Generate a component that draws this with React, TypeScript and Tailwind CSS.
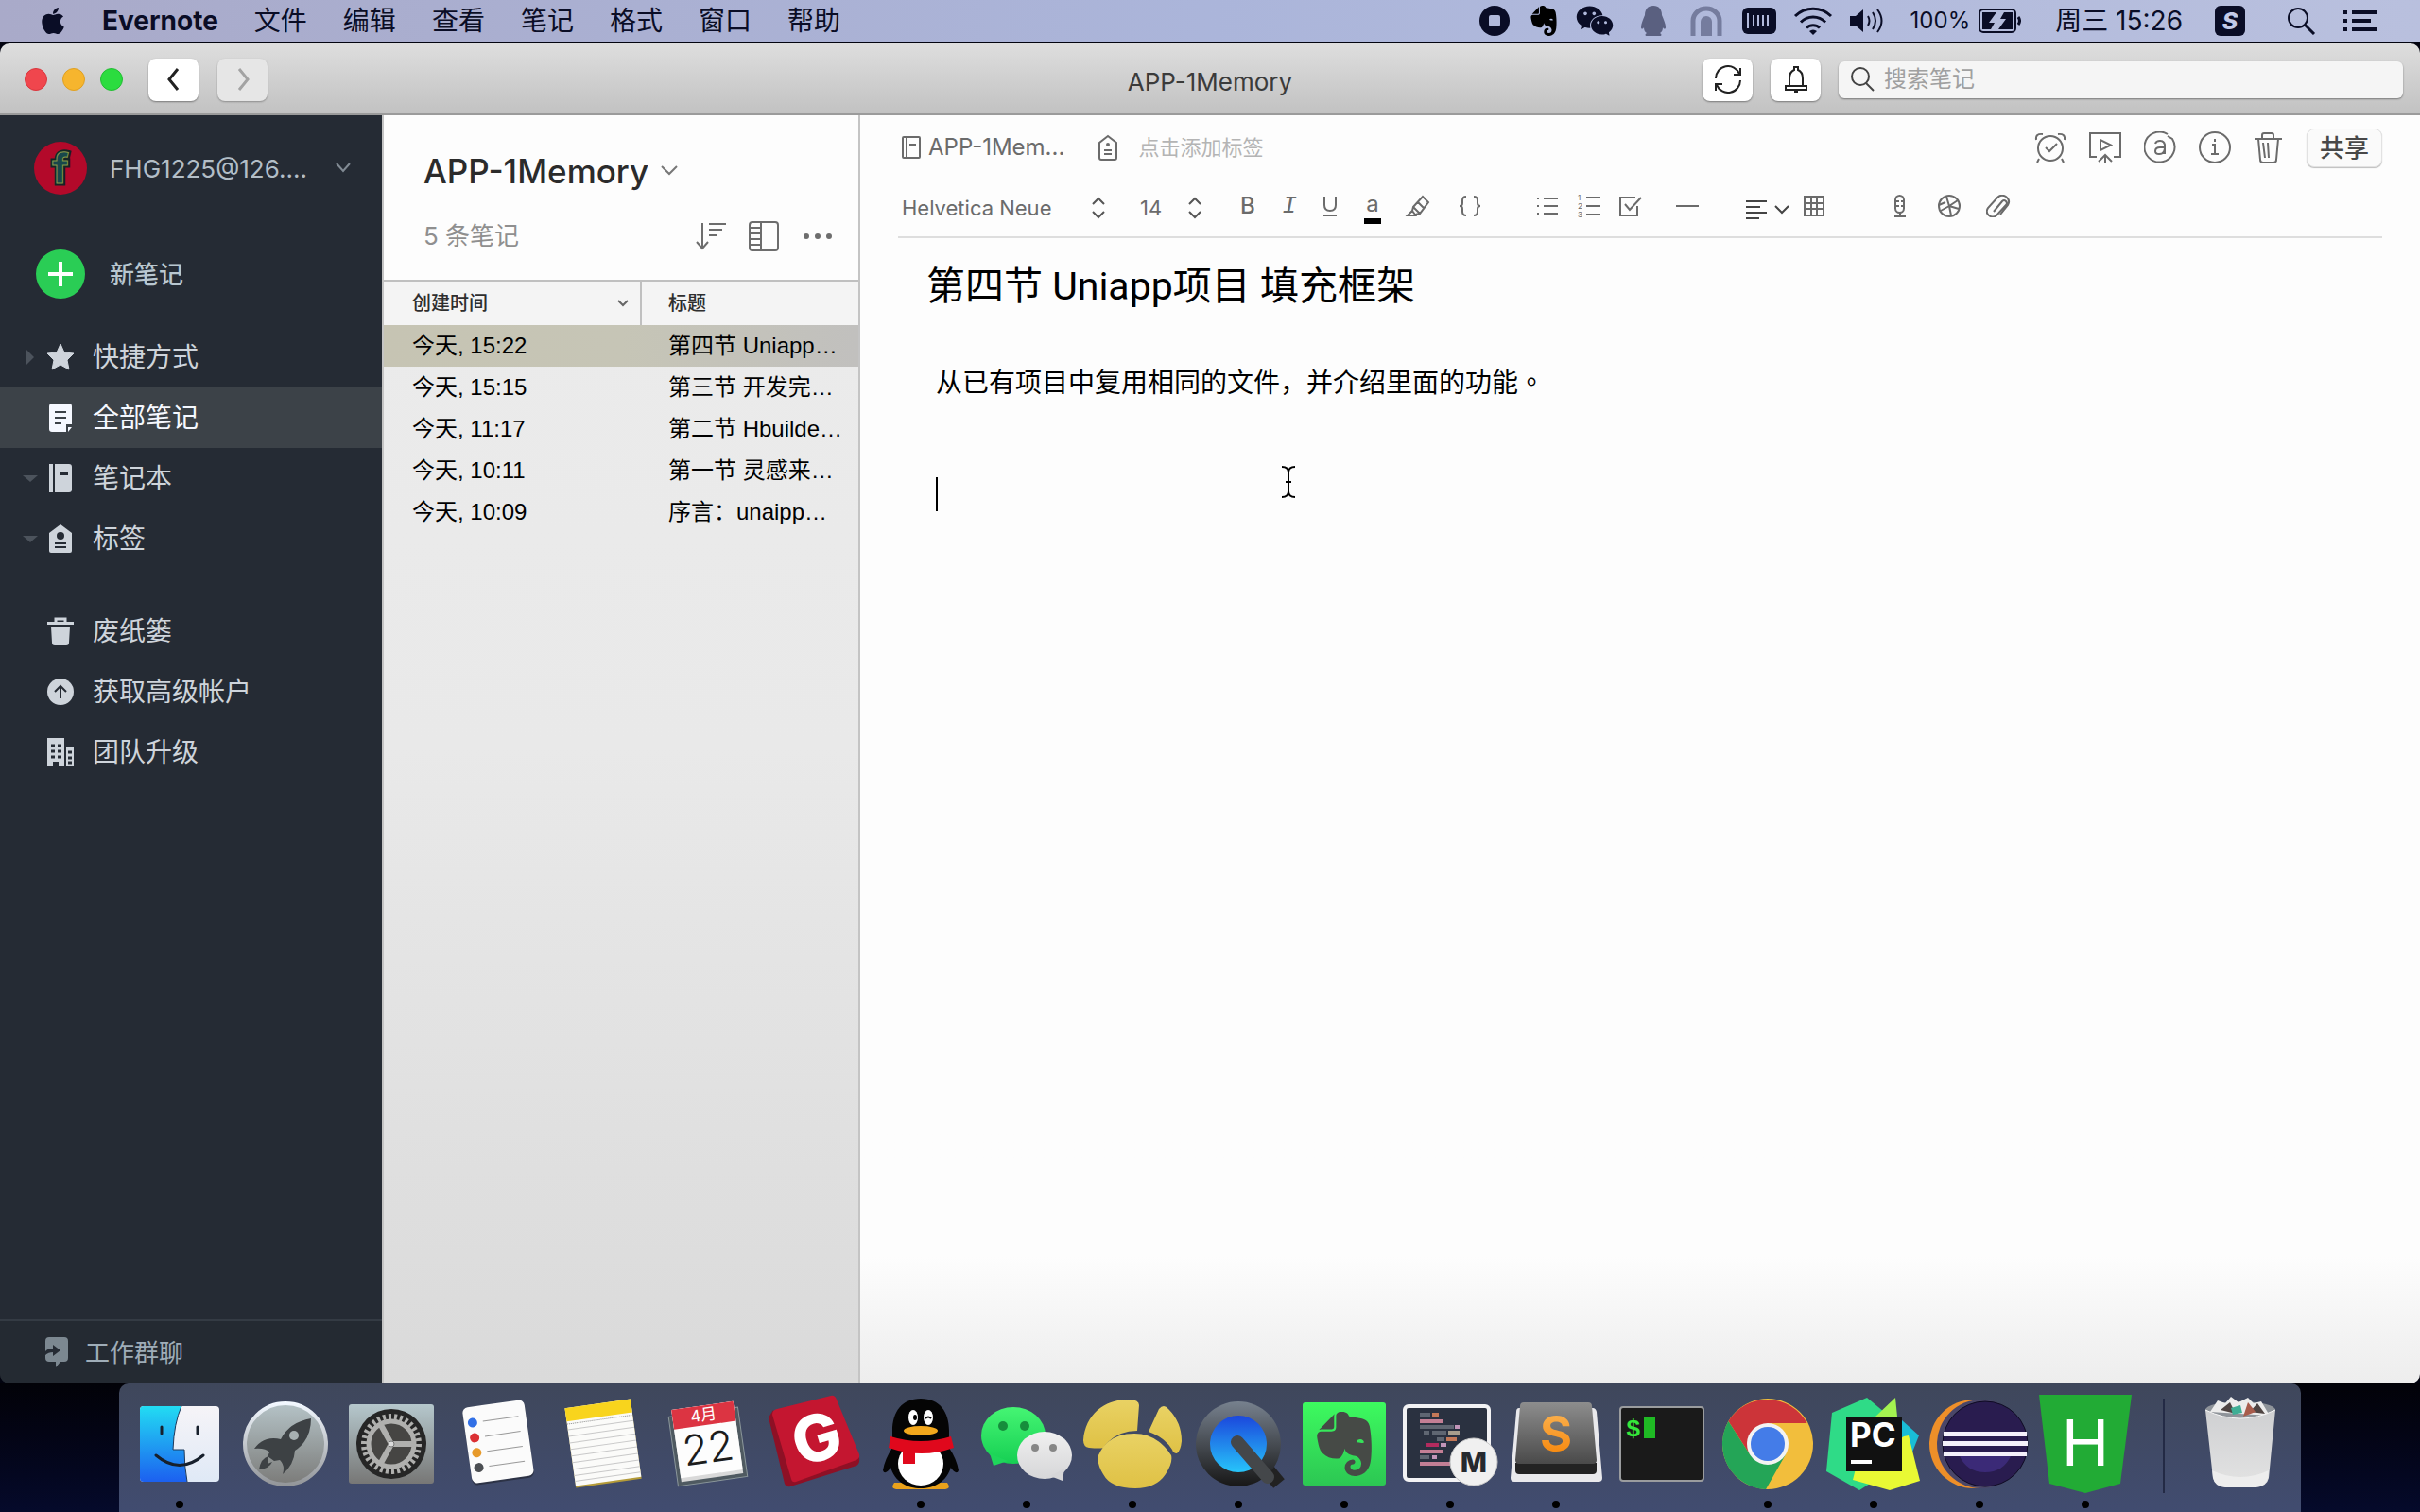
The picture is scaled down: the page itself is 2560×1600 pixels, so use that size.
import type { ReactNode } from 'react'
import { FaApple } from 'react-icons/fa'
import { SiEvernote } from 'react-icons/si'
import { AiFillWechat } from 'react-icons/ai'

const menus = ['文件', '编辑', '查看', '笔记', '格式', '窗口', '帮助']

const notes = [
  { time: '今天, 15:22', title: '第四节 Uniapp…', selected: true },
  { time: '今天, 15:15', title: '第三节 开发完…', selected: false },
  { time: '今天, 11:17', title: '第二节 Hbuilde…', selected: false },
  { time: '今天, 10:11', title: '第一节 灵感来…', selected: false },
  { time: '今天, 10:09', title: '序言：unaipp…', selected: false },
]

interface IconProps {
  w?: number
  h?: number
  sw?: number
  className?: string
  children: ReactNode
}

function Icon({ w = 28, h = 28, sw = 2, className, children }: IconProps) {
  return (
    <svg
      width={w}
      height={h}
      viewBox={`0 0 ${w} ${h}`}
      fill="none"
      stroke="currentColor"
      strokeWidth={sw}
      className={className}
      aria-hidden="true"
    >
      {children}
    </svg>
  )
}

/* ---------- menu bar ---------- */

function MenuBar() {
  return (
    <header className="flex h-11 shrink-0 items-center bg-linear-to-r from-[#a9aac9] via-[#abb5da] to-[#b9c0de] pr-[45px] pl-10 text-[#0a0d26]">
      <FaApple className="size-8" />
      <nav className="ml-9 flex items-center gap-[38px] text-[28px] leading-9">
        <button className="font-bold">Evernote</button>
        {menus.map((m) => (
          <button key={m}>{m}</button>
        ))}
      </nav>
      <div className="ml-auto flex items-center">
        <div className="flex items-center gap-3">
          <Icon w={40} h={32}>
            <circle cx="20" cy="16" r="16" fill="currentColor" stroke="none" />
            <rect x="14" y="10" width="12" height="12" rx="2" fill="#b1b9db" stroke="none" />
          </Icon>
          <SiEvernote className="h-8 w-10 text-black" />
          <AiFillWechat className="size-11" />
        </div>
        <div className="ml-5 flex items-center gap-4">
          <Icon w={40} h={32}>
            <path d="M20 0c-6 0-9 4-9 10-2 5-4 9-4 13 0 2 2 2 3 0 0 3 1 5 3 6-2 1-2 3 0 3h14c2 0 2-2 0-3 2-1 3-3 3-6 1 2 3 2 3 0 0-4-2-8-4-13 0-6-3-10-9-10Z" fill="#5a6080" stroke="none" />
          </Icon>
          <Icon w={40} h={32} sw={5}>
            <path d="M6 32V16a14 13 0 0 1 28 0v16" stroke="#757c9e" />
            <path d="M14 32V17a6 6 0 0 1 12 0v15Z" fill="#757c9e" stroke="none" />
          </Icon>
          <Icon w={40} h={32}>
            <rect x="2" y="2" width="36" height="28" rx="6" fill="currentColor" stroke="none" />
            <path d="M8 8v16M14 10v12M19 10v12M24 10v12M29 10v12" stroke="#b1b9db" strokeWidth="2" />
          </Icon>
          <Icon w={42} h={32} sw={3}>
            <path d="M2 11a27 27 0 0 1 38 0M8 17.500a18 18 0 0 1 26 0M14 23.500a10 10 0 0 1 14 0" />
            <path d="m21 31-4-4a6 6 0 0 1 8 0Z" fill="currentColor" stroke="none" />
          </Icon>
          <Icon w={38} h={32} sw={2}>
            <path d="M2 11h6l8-7v24l-8-7H2Z" fill="currentColor" stroke="none" />
            <path d="M21 11q3 5 0 10M26 7q6 9 0 18M31 4q9 12 0 24" />
          </Icon>
        </div>
        <span className="ml-7 text-2xl">100%</span>
        <Icon w={46} h={28} className="ml-2" sw={2}>
          <rect x="2" y="2" width="38" height="24" rx="4" />
          <path d="M43 10q3 4 0 8" strokeWidth="3" />
          <path d="M5 5h15l-8 11h6l-4 7H5ZM37 5v18H22l8-11h-6l4-7Z" fill="currentColor" stroke="none" />
        </Icon>
        <span className="ml-9 text-[28px]">周三 15:26</span>
        <svg width="32" height="32" viewBox="0 0 32 32" className="ml-[34px]" aria-hidden="true">
          <rect width="32" height="32" rx="6" fill="#0a0d26" />
          <text x="16" y="25" textAnchor="middle" fontSize="25" fontWeight="800" fontStyle="italic" fill="#c3cae8">S</text>
        </svg>
        <Icon w={32} h={30} className="ml-11" sw={2}>
          <circle cx="12" cy="12" r="10" />
          <path d="m19 19 10 10" strokeWidth="3" />
        </Icon>
        <Icon w={36} h={22} className="ml-7" sw={4}>
          <path d="M0 2h4M9 2h27M0 11h4M9 11h20M0 20h4M9 20h27" />
        </Icon>
      </div>
    </header>
  )
}

/* ---------- window title bar ---------- */

function TitleBar() {
  return (
    <div className="grid h-[76px] shrink-0 grid-cols-[1fr_auto_1fr] items-center border-b-2 border-[#9b9b9b] bg-linear-to-b from-[#dedede] to-[#c2c2c2] px-[18px] pt-[2px]">
      <div className="flex items-center pl-2">
        <div className="flex gap-4">
          <button aria-label="Close" className="size-6 rounded-full border border-[#d9363d] bg-[#f0464d]" />
          <button aria-label="Minimize" className="size-6 rounded-full border border-[#dfa023] bg-[#f6b52e]" />
          <button aria-label="Zoom" className="size-6 rounded-full border border-[#22bd33] bg-[#2bdc3f]" />
        </div>
        <button aria-label="Back" className="ml-[27px] flex h-[45px] w-[53px] items-center justify-center rounded-lg bg-white text-[#222] shadow-[0_1px_2px_rgba(0,0,0,0.4)]">
          <Icon w={16} h={26} sw={3}><path d="M12 2 3 13l9 11" /></Icon>
        </button>
        <button aria-label="Forward" className="ml-5 flex h-[45px] w-[53px] items-center justify-center rounded-lg bg-[#e6e6e6] text-[#a3a3a3] shadow-[0_1px_2px_rgba(0,0,0,0.3)]">
          <Icon w={16} h={26} sw={3}><path d="m4 2 9 11-9 11" /></Icon>
        </button>
      </div>
      <h1 className="pt-[6px] text-[26px] leading-8 text-[#3b3b3b]">APP-1Memory</h1>
      <div className="flex items-center justify-end">
        <button aria-label="Sync" className="flex h-[45px] w-[53px] items-center justify-center rounded-lg bg-white text-[#222] shadow-[0_1px_2px_rgba(0,0,0,0.4)]">
          <Icon w={30} h={30}>
            <path d="M2 14A13 13 0 0 1 27 9M28 3v7h-7M28 16A13 13 0 0 1 3 21M2 27v-7h7" />
          </Icon>
        </button>
        <button aria-label="Notifications" className="ml-[19px] flex h-[45px] w-[53px] items-center justify-center rounded-lg bg-white text-[#222] shadow-[0_1px_2px_rgba(0,0,0,0.4)]">
          <Icon w={26} h={30}>
            <path d="M6 21V14q0-7 5-9V2h4v3q5 2 5 9v7M2 22h22v4H2ZM11 28h4" />
          </Icon>
        </button>
        <label className="ml-[19px] flex h-[39px] w-[597px] items-center rounded-md bg-[#f5f5f5] px-3 shadow-[0_1px_2px_rgba(0,0,0,0.4)]">
          <Icon w={26} h={28} className="text-[#444]">
            <circle cx="11" cy="11" r="9" />
            <path d="m17 18 8 8" />
          </Icon>
          <input type="search" aria-label="搜索笔记" placeholder="搜索笔记" className="ml-[10px] min-w-0 flex-1 bg-transparent text-2xl outline-none placeholder:text-[#a0a0a0]" />
        </label>
      </div>
    </div>
  )
}

/* ---------- sidebar ---------- */

interface NavRowProps {
  icon: ReactNode
  label: string
  arrow?: 'right' | 'down'
  active?: boolean
}

function NavRow({ icon, label, arrow, active }: NavRowProps) {
  return (
    <button className={`flex h-16 w-full items-center pl-6 text-[28px] ${active ? 'bg-[#3c4248] text-[#f5f8ff]' : 'text-[#ced4db]'}`}>
      <svg width="16" height="16" viewBox="0 0 16 16" fill="#4c535c" aria-hidden="true">
        {arrow === 'right' && <path d="m4 0 8 8-8 8Z" />}
        {arrow === 'down' && <path d="m0 5 8 7 8-7Z" />}
      </svg>
      <svg width="28" height="30" viewBox="0 0 28 30" fill="currentColor" className="ml-[10px]" aria-hidden="true">
        {icon}
      </svg>
      <span className="ml-5">{label}</span>
    </button>
  )
}

function Sidebar() {
  return (
    <aside className="flex w-[404px] shrink-0 flex-col bg-[#252b34]">
      <div className="mt-7 flex h-14 items-center pl-9">
        <svg width="56" height="56" viewBox="0 0 56 56" aria-hidden="true">
          <circle cx="28" cy="28" r="28" fill="#b3092a" />
          <g fontSize="44" fontWeight="700" textAnchor="middle">
            <text x="28" y="44" fill="#152526" stroke="#152526" strokeWidth="5">f</text>
            <text x="28" y="44" fill="#18474b" stroke="#86994a" strokeWidth="1">f</text>
          </g>
        </svg>
        <button className="ml-6 flex flex-1 items-center text-[26px] text-[#b3bec7]">
          FHG1225@126....
          <Icon w={18} h={12} sw={2} className="mr-8 ml-auto text-[#818a93]"><path d="m2 1 7 8 7-8" /></Icon>
        </button>
      </div>
      <button className="mt-[58px] flex h-[52px] items-center pl-[38px] text-[26px] font-medium text-[#b9c7d0]">
        <svg width="52" height="52" viewBox="0 0 52 52" aria-hidden="true">
          <circle cx="26" cy="26" r="26" fill="#2acd55" />
          <path d="M26 13v26M13 26h26" stroke="#fff" strokeWidth="4" />
        </svg>
        <span className="ml-[26px]">新笔记</span>
      </button>
      <nav className="mt-[30px]">
        <NavRow
          arrow="right"
          label="快捷方式"
          icon={<path d="m14 1 4 9 10 1-7 7 2 10-9-5-9 5 2-10-7-7 10-1Z" stroke="currentColor" strokeLinejoin="round" />}
        />
        <NavRow
          active
          label="全部笔记"
          icon={
            <>
              <path d="M5 0h18q3 0 3 3v19h-6v8H5q-3 0-3-3V3q0-3 3-3ZM22 25h4l-4 5Z" />
              <path d="M8 9h12M8 15h12M8 21h7" stroke="#3c4248" strokeWidth="2" />
            </>
          }
        />
        <NavRow
          arrow="down"
          label="笔记本"
          icon={
            <>
              <path d="M2 0h4v30H2ZM8 0h15q3 0 3 3v24q0 3-3 3H8Z" />
              <path d="M13 10h9" stroke="#252b34" strokeWidth="4" />
            </>
          }
        />
        <NavRow
          arrow="down"
          label="标签"
          icon={
            <>
              <path d="M14 0 26 9v19q0 2-2 2H4q-2 0-2-2V9Z" />
              <circle cx="14" cy="12" r="4" fill="#252b34" />
              <path d="M8 20h12M8 24h12" stroke="#252b34" strokeWidth="2" />
            </>
          }
        />
        <div className="h-[34px]" />
        <NavRow
          label="废纸篓"
          icon={
            <>
              <path d="M4 10h20l-1 17q0 3-3 3H8q-3 0-3-3ZM0 5h28v3H0Z" />
              <path d="M9 6V2h10v4" fill="none" stroke="currentColor" strokeWidth="3" />
            </>
          }
        />
        <NavRow
          label="获取高级帐户"
          icon={
            <>
              <circle cx="14" cy="15" r="14" />
              <path d="M14 22V9m-6 6 6-6 6 6" fill="none" stroke="#252b34" strokeWidth="2" />
            </>
          }
        />
        <NavRow
          label="团队升级"
          icon={
            <>
              <path d="M0 0h18v30h-6v-5H6v5H0ZM20 9h8v21h-8Z" />
              <path d="M4 8h4M11 8h4M4 14h4M11 14h4M4 20h4M11 20h4M22 15h4M22 21h4M22 26h4" stroke="#252b34" strokeWidth="3" />
            </>
          }
        />
      </nav>
      <button className="mt-auto flex h-[68px] items-center border-t-2 border-[#343b44] bg-[#242a32] pl-12 text-[26px] text-[#9fadb8]">
        <svg width="24" height="32" viewBox="0 0 24 32" aria-hidden="true">
          <path d="M4 0h16q4 0 4 4v18q0 4-4 4h-4l-5 6v-6H4q-4 0-4-4V4q0-4 4-4Z" fill="#7c8891" />
          <path d="M0 15q2-3 8-3V8l8 6-8 6v-4q-5 0-8 3Z" fill="#252b34" />
        </svg>
        <span className="ml-[18px]">工作群聊</span>
      </button>
    </aside>
  )
}

/* ---------- note list ---------- */

function NoteList() {
  return (
    <section className="w-[506px] shrink-0 border-x-2 border-[#c4c4c4] bg-linear-to-b from-[#ececec] via-[#e9e9e9] to-[#dadada]">
      <div className="h-[174px] bg-[#fdfdfd] pt-9 pr-7 pl-[42px]">
        <button className="flex items-center text-[35px] leading-[46px] font-medium text-[#2b2b2b]">
          APP-1Memory
          <Icon w={20} h={12} className="ml-3 text-[#777]"><path d="m2 1 8 8 8-8" /></Icon>
        </button>
        <div className="mt-7 flex items-center text-[#6d6d6d]">
          <span className="flex-1 text-[26px] leading-9 text-[#8f8f8f]">5 条笔记</span>
          <button aria-label="Sort">
            <Icon w={32} h={32}><path d="M7 2v27M1 22l6 7 6-7M14 3h18M14 9h14M14 15h9" /></Icon>
          </button>
          <button aria-label="View" className="ml-6">
            <Icon w={32} h={32}><rect x="1" y="1" width="30" height="30" rx="3" /><path d="M13 1v30M1 7h12M1 13h12M1 19h12M1 25h12" /></Icon>
          </button>
          <button aria-label="More" className="ml-[26px]">
            <Icon w={30} h={8}><path d="M3 1a3 3 0 1 1 0 6 3 3 0 0 1 0-6ZM15 1a3 3 0 1 1 0 6 3 3 0 0 1 0-6ZM27 1a3 3 0 1 1 0 6 3 3 0 0 1 0-6Z" fill="currentColor" stroke="none" /></Icon>
          </button>
        </div>
      </div>
      <table className="w-full table-fixed border-collapse text-left text-black">
        <thead>
          <tr className="h-[47px] border-t-2 border-[#c0c0c0] bg-[#f4f4f4] text-xl text-[#2e2e2e]">
            <th className="w-[272px] border-r-2 border-[#c0c0c0] pl-[30px] font-medium">
              <span className="flex items-center justify-between pr-3">
                创建时间
                <Icon w={12} h={10} className="text-[#666]"><path d="m1 2 5 5 5-5" /></Icon>
              </span>
            </th>
            <th className="pl-[28px] font-medium">标题</th>
          </tr>
        </thead>
        <tbody className="font-[Liberation_Sans,Noto_Sans_CJK_SC,sans-serif] text-2xl">
          {notes.map((n) => (
            <tr key={n.time} className={n.selected ? 'h-11 bg-linear-to-r from-[#c6c4b3] via-[#c6c5b6] to-[#c1c0be]' : 'h-11'}>
              <td className="pl-[30px]">{n.time}</td>
              <td className="pl-[29px] whitespace-nowrap">{n.title}</td>
            </tr>
          ))}
        </tbody>
      </table>
    </section>
  )
}

/* ---------- editor ---------- */

function Tool({ label, wide, children }: { label: string; wide?: boolean; children: ReactNode }) {
  return (
    <button aria-label={label} className={`flex h-8 items-center justify-center ${wide ? 'w-[52px]' : 'w-11'}`}>
      {children}
    </button>
  )
}

function UpDown() {
  return (
    <Icon w={16} h={24} className="pointer-events-none text-[#555]">
      <path d="m2 8 6-6 6 6M2 16l6 6 6-6" />
    </Icon>
  )
}

function EditorHead() {
  return (
    <div className="flex h-[68px] items-center pr-10 pl-11 text-[#6b6b6b]">
      <button className="flex items-center text-2xl">
        <Icon w={20} h={24}><rect x="1" y="1" width="18" height="22" rx="1" /><path d="M5 1v22M8 9h7" /></Icon>
        <span className="ml-2">APP-1Mem...</span>
      </button>
      <label className="ml-9 flex items-center">
        <Icon w={20} h={28}>
          <path d="M10 2 19 9v16q0 2-2 2H3q-2 0-2-2V9Z" />
          <circle cx="10" cy="11" r="1" />
          <path d="M6 17h8M6 21h8" />
        </Icon>
        <input aria-label="点击添加标签" placeholder="点击添加标签" className="ml-[22px] w-40 bg-transparent text-[22px] outline-none placeholder:text-[#b4b4b4]" />
      </label>
      <div className="ml-auto flex items-center gap-6">
        <button aria-label="Reminder">
          <Icon w={34} h={34}>
            <circle cx="17" cy="18" r="13" />
            <path d="m12 17 4 4 8-8M2 9Q1 2 9 3M32 9q1-7-7-6M5 29l-2 4M29 29l2 4" />
          </Icon>
        </button>
        <button aria-label="Present">
          <Icon w={34} h={34}>
            <path d="M8 27H1V2h32v25h-7M12 9v11l11-5.500ZM17 34V25M10 32l7-7 7 7" />
          </Icon>
        </button>
        <button aria-label="Annotate">
          <Icon w={34} h={34}>
            <path d="M25 3A16 16 0 1 0 30 8l-5-3" />
            <path d="M12 13q1-3 5-3t5 4v10M22 17h-5q-5 0-5 4 0 3 4 3 6 0 6-7" />
          </Icon>
        </button>
        <button aria-label="Info">
          <Icon w={34} h={34}>
            <circle cx="17" cy="17" r="16" />
            <path d="M14 14h3v10M13 24h8M17 8v3" />
          </Icon>
        </button>
        <button aria-label="Delete">
          <Icon w={32} h={34}>
            <path d="M1 8h29M9 8V4q0-2 2-2h8q2 0 2 2v4M5 8l2 22q0 3 3 3h11q3 0 3-3L26 8M10 12l2 16M15 12l1 16" />
          </Icon>
        </button>
        <button className="flex h-[41px] w-20 items-center justify-center rounded-lg border border-[#e2e2e2] bg-[#fafafa] text-[26px] font-medium text-[#484848] shadow-[0_1px_1px_rgba(0,0,0,0.25)]">
          共享
        </button>
      </div>
    </div>
  )
}

function Toolbar() {
  return (
    <div className="mr-10 ml-10 flex h-[62px] items-start border-b-2 border-[#dedede] pt-3 pl-1 text-[#6b6b6b]">
      <div className="flex h-9 items-center text-[22px]">
        <select aria-label="Font" className="w-[200px] appearance-none bg-transparent outline-none">
          <option>Helvetica Neue</option>
        </select>
        <UpDown />
        <select aria-label="Size" className="ml-9 w-[50px] appearance-none bg-transparent outline-none">
          <option>14</option>
        </select>
        <UpDown />
      </div>
      <div className="ml-[26px] flex">
        <Tool label="Bold"><span className="text-2xl font-medium">B</span></Tool>
        <Tool label="Italic"><span className="font-[Liberation_Mono,monospace] text-[26px] italic">I</span></Tool>
        <Tool label="Underline">
          <Icon w={26} h={24}><path d="M6 2v9q0 6 6 6t6-6V2M5 22h14" /></Icon>
        </Tool>
        <Tool label="Text color">
          <span className="mt-1 flex flex-col items-center text-2xl leading-6">
            a
            <span className="mt-[3px] h-[6px] w-[18px] bg-black" />
          </span>
        </Tool>
        <Tool label="Highlight" wide>
          <Icon h={24}><path d="m9 13 10-11 6 6-9 12-5 1-3-4ZM9 13l7 7M14 8l6 6M8 17l-5 5h9l1-2" /></Icon>
        </Tool>
        <Tool label="Code" wide>
          <Icon h={24}><path d="M13 2Q9 2 9 6v3q0 3-3 3 3 0 3 3v3q0 4 4 4M21 2q4 0 4 4v3q0 3 3 3-3 0-3 3v3q0 4-4 4" /></Icon>
        </Tool>
      </div>
      <div className="ml-[37px] flex">
        <Tool label="Bulleted list">
          <Icon w={24} h={24}><path d="M1 4h2M8 4h15M1 12h2M8 12h15M1 20h2M8 20h15" /></Icon>
        </Tool>
        <Tool label="Numbered list">
          <svg width="26" height="28" viewBox="0 0 26 28" aria-hidden="true">
            <path d="M10 5h15M10 14h15M10 23h15" stroke="currentColor" strokeWidth="2" />
            <g fontSize="8" fill="currentColor">
              <text x="1" y="8">1</text>
              <text x="1" y="17">2</text>
              <text x="1" y="26">3</text>
            </g>
          </svg>
        </Tool>
        <Tool label="Checklist">
          <Icon w={26} h={24}><path d="M18 3H2v19h18V12M7 10l5 6L24 3" /></Icon>
        </Tool>
      </div>
      <div className="ml-4 flex">
        <Tool label="Divider"><Icon w={24} h={24}><path d="M0 12h24" /></Icon></Tool>
      </div>
      <button aria-label="Align" className="mt-1 ml-10 flex h-8 items-center text-[#444]">
        <Icon w={24} h={22}><path d="M0 2h22M0 8h15M0 14h22M0 20h14" strokeWidth="2" /></Icon>
        <Icon w={16} h={12} className="ml-[6px]"><path d="m1 2 7 7 7-7" /></Icon>
      </button>
      <div className="ml-1 flex">
        <Tool label="Table">
          <Icon w={22} h={22}><path d="M1 1h20v20H1ZM1 8h20M1 14h20M8 1v20M14 1v20" /></Icon>
        </Tool>
      </div>
      <div className="ml-[43px] flex">
        <Tool label="Record" wide>
          <Icon w={16} h={24}><rect x="3" y="1" width="9" height="18" rx="4.500" /><path d="M4 7h3M9 7h3M4 12h3M9 12h3M8 19v3M2 23h12" /></Icon>
        </Tool>
        <Tool label="Camera" wide>
          <Icon w={24} h={24}><circle cx="12" cy="12" r="11" /><path d="m9 2 3 10M21 6l-9 6M22 15l-10-3M14 22l-2-10M3 17l9-5M1 11l7-3" /></Icon>
        </Tool>
        <Tool label="Attach" wide>
          <Icon w={26} h={24}><path d="m8 18 9-11q2-2 4 0t0 4L11 22q-4 3-8 0t-1-8L12 3q4-4 9-1 5 4 2 9l-8 10" /></Icon>
        </Tool>
      </div>
    </div>
  )
}

function Editor() {
  return (
    <main className="relative flex min-w-0 flex-1 flex-col bg-linear-to-b from-[#fdfdfd] from-90% to-[#ededed]">
      <EditorHead />
      <Toolbar />
      <input
        aria-label="Title"
        defaultValue="第四节 Uniapp项目 填充框架"
        className="mt-4 mr-10 ml-[70px] h-[62px] bg-transparent font-[Roboto,Noto_Sans_CJK_SC,sans-serif] text-[41px] text-black outline-none"
      />
      <div role="textbox" aria-label="Note" className="mt-[51px] mr-10 ml-20 text-[28px] leading-[44px] text-black">
        <p>从已有项目中复用相同的文件，并介绍里面的功能<span lang="zh-TW" className="font-[Noto_Sans_CJK_TC,sans-serif]">。</span></p>
        <p className="mt-[78px] h-9 w-[2px] bg-black" />
      </div>
      {/* pointer */}
      <Icon w={18} h={34} className="absolute top-[371px] left-[444px] text-black">
        <path d="M2 1q7 0 7 6v20q0 6-7 6M16 1q-7 0-7 6v20q0 6 7 6M6 17h6" />
      </Icon>
    </main>
  )
}

/* ---------- dock ---------- */

function DockItem({ name, running, children }: { name: string; running?: boolean; children: ReactNode }) {
  return (
    <button aria-label={name} className="flex w-28 flex-col items-center">
      <svg width="112" height="112" viewBox="0 0 112 112" aria-hidden="true">{children}</svg>
      {running && <span className="mt-1 size-2 rounded-full bg-black" />}
    </button>
  )
}

function Grad({ id, from, to }: { id: string; from: string; to: string }) {
  return (
    <linearGradient id={id} x1="0" y1="0" x2="0" y2="1">
      <stop offset="0" stopColor={from} />
      <stop offset="1" stopColor={to} />
    </linearGradient>
  )
}

function Dock() {
  return (
    <footer className="flex h-[136px] shrink-0 justify-center bg-linear-to-b from-[#020208] to-[#050a2b]">
      <div className="flex rounded-t-[10px] bg-linear-to-b from-[#3f475b] to-[#414c70] px-2 pt-2">
        <DockItem name="Finder" running>
          <defs>
            <Grad id="fi" from="#22dcf3" to="#1c60f0" />
            <Grad id="fw" from="#f6f4f8" to="#dfe9f6" />
          </defs>
          <rect x="14" y="16" width="84" height="80" rx="4" fill="url(#fw)" />
          <path d="M18 16h40q-8 18-9 46h12q0 18 3 34H18q-4 0-4-4V20q0-4 4-4Z" fill="url(#fi)" />
          <path d="M58 16q-8 18-9 46h12q0 18 3 34" fill="none" stroke="#1d3a5c" strokeWidth="1" />
          <path d="M37 38v7M75 38v7M31 68q25 21 50 0" fill="none" stroke="#17202c" strokeWidth="3" strokeLinecap="round" />
        </DockItem>
        <DockItem name="Launchpad">
          <defs><Grad id="lp" from="#b5c3c7" to="#7b7b79" /><Grad id="lr" from="#f2f8ff" to="#93969a" /></defs>
          <circle cx="56" cy="56" r="43" fill="url(#lp)" stroke="url(#lr)" strokeWidth="4" />
          <path d="M83 29Q60 33 51 51q-18-4-28 10 12-1 16 4l-2 4 7 5 6-1q6 6 3 15 12-10 13-25Q83 52 83 29Z" fill="#3d4144" />
          <path d="M38 69q-8 2-10 14 11-1 14-8l-5 2Z" fill="#3d4144" />
          <circle cx="65" cy="47" r="5" fill="#a7b0b2" />
        </DockItem>
        <DockItem name="System Preferences">
          <defs><Grad id="sp" from="#b5c7cc" to="#777776" /></defs>
          <rect x="11" y="14" width="90" height="84" rx="3" fill="url(#sp)" />
          <circle cx="56" cy="56" r="37" fill="#262626" />
          <circle cx="56" cy="56" r="29" fill="none" stroke="#b0b0ae" strokeWidth="6" pathLength="60" strokeDasharray="1 1" />
          <circle cx="56" cy="56" r="24" fill="#464543" stroke="#b0b0ae" strokeWidth="5" />
          <path d="M56 56h23M56 56 45 36M56 56 45 76" stroke="#b0b0ae" strokeWidth="6" />
          <circle cx="56" cy="56" r="3" fill="#ddd" stroke="#777" />
        </DockItem>
        <DockItem name="Reminders">
          <g transform="rotate(-8 57 54)">
            <rect x="24" y="14" width="66" height="82" rx="6" fill="#17191f" opacity=".5" />
            <rect x="24" y="13" width="66" height="81" rx="6" fill="#fbfbfb" />
            <path d="M44 30h38M44 46h38M44 62h38M44 78h38" stroke="#999" strokeWidth="1" />
            <circle cx="33" cy="30" r="5" fill="#3170e6" />
            <circle cx="33" cy="46" r="5" fill="#db3034" />
            <circle cx="33" cy="62" r="5" fill="#e79a2a" />
            <circle cx="33" cy="78" r="5" fill="#4c4f53" />
          </g>
        </DockItem>
        <DockItem name="Notes">
          <g transform="rotate(-8 56 55)">
            <rect x="21" y="13" width="70" height="85" fill="#b49b38" />
            <rect x="21" y="13" width="70" height="83" fill="#fbfbf9" />
            <path d="M21 13h70v14H21Z" fill="#f8d41d" />
            <path d="M21 30h70" stroke="#888" strokeDasharray="1 1" />
            <path d="M21 36h70M21 43h70M21 50h70M21 57h70M21 64h70M21 71h70M21 78h70M21 85h70M21 91h70" stroke="#c9c9c9" />
          </g>
        </DockItem>
        <DockItem name="Calendar">
          <g transform="rotate(-8 54 52)">
            <rect x="17" y="22" width="74" height="74" fill="#4f5a61" stroke="#8b979b" />
            <rect x="21" y="15" width="66" height="77" fill="#d9d9d9" />
            <rect x="21" y="15" width="66" height="73" fill="#fdfdfd" />
            <rect x="21" y="15" width="66" height="21" fill="#dc3442" />
            <text x="54" y="31" textAnchor="middle" fontSize="17" fill="#fff">4月</text>
            <text x="54" y="76" textAnchor="middle" fontSize="44" fontWeight="300" fill="#1c1c1c">22</text>
          </g>
        </DockItem>
        <DockItem name="Gyazo">
          <path d="M12 20 7 28l17 70q2 4 6 3l70-22q4-2 3-9L34 90Z" fill="#8e1025" />
          <path d="M16 19 73 5q4-1 6 4l24 58q1 4-3 6L36 96q-4 1-5-3L11 25q0-5 5-6Z" fill="#c41630" />
          <text x="58" y="74" textAnchor="middle" fontSize="68" fontWeight="800" fill="#fff" transform="rotate(-17 58 50)">G</text>
        </DockItem>
        <DockItem name="QQ" running>
          <path d="M28 97h56q5 7-4 7H32q-9 0-4-7Z" fill="#eba21b" />
          <path d="M26 60q-8 12-10 24 2 6 9-4h62q7 10 9 4-2-12-10-24Z" fill="#050505" />
          <path d="M56 8c-20 0-30 14-30 34v18q-4 8-2 20c4 16 18 23 32 23s28-7 32-23q2-12-2-20V42C86 22 76 8 56 8Z" fill="#050505" />
          <ellipse cx="56" cy="77" rx="24" ry="23" fill="#fff" />
          <path d="M24 48q32 10 64 0l3 12q-34 12-69 0Z" fill="#e0081c" />
          <path d="M37 60h13v17H37Z" fill="#e0081c" />
          <ellipse cx="48" cy="28" rx="5" ry="8" fill="#fff" />
          <ellipse cx="64" cy="28" rx="5" ry="8" fill="#fff" />
          <ellipse cx="50" cy="28" rx="2" ry="3" fill="#000" />
          <path d="M61 29q3-3 6 0" fill="none" stroke="#000" strokeWidth="2" />
          <ellipse cx="56" cy="42" rx="18" ry="5" fill="#f2a71c" />
        </DockItem>
        <DockItem name="WeChat" running>
          <defs><Grad id="wg" from="#45f573" to="#16cf53" /><Grad id="ww" from="#f0f0f0" to="#d6d6d8" /></defs>
          <ellipse cx="42" cy="47" rx="34" ry="30" fill="url(#wg)" />
          <path d="m17 66 4 13 15-5Z" fill="#1fd65b" />
          <ellipse cx="75" cy="68" rx="29" ry="25" fill="url(#ww)" />
          <path d="m96 82-2 13-13-5Z" fill="#d6d6d8" />
          <circle cx="31" cy="37" r="5" fill="#168d3c" />
          <circle cx="54" cy="37" r="5" fill="#168d3c" />
          <circle cx="65" cy="60" r="4" fill="#868686" />
          <circle cx="84" cy="60" r="4" fill="#868686" />
        </DockItem>
        <DockItem name="Navicat" running>
          <defs><Grad id="nv" from="#e9d264" to="#dfc145" /></defs>
          <g fill="url(#nv)">
            <path d="M10 60q-6-1-6-8C6 24 28 8 52 9q11 0 11 6l-2 27q-23 0-36 18-3 1-15 0Z" />
            <path d="M84 19q5-6 10 0 14 14 14 34-1 10-5 13-4 0-5-4-8-13-25-19Z" />
            <path d="M58 45q24 0 39 23 2 8-6 20-10 15-32 15-26 0-34-15-7-11-5-20Q30 45 58 45Z" />
          </g>
        </DockItem>
        <DockItem name="QuickTime Player" running>
          <defs><Grad id="qo" from="#77818e" to="#171717" /><Grad id="qi" from="#1b46dc" to="#27c5fa" /></defs>
          <path d="M80 75 99 98" stroke="#222" strokeWidth="15" />
          <circle cx="56" cy="56" r="45" fill="url(#qo)" />
          <circle cx="56" cy="56" r="30" fill="url(#qi)" />
          <path d="m55 54 32 37" stroke="#44474a" strokeWidth="14" strokeLinecap="round" />
        </DockItem>
        <DockItem name="Evernote" running>
          <defs><Grad id="ev" from="#3dfa5f" to="#2cc753" /></defs>
          <rect x="12" y="12" width="88" height="88" rx="3" fill="url(#ev)" />
          <SiEvernote x={22} y={22} size={68} color="#464a46" />
        </DockItem>
        <DockItem name="Material Editor" running>
          <rect x="8" y="16" width="89" height="78" rx="4" fill="#2a3140" stroke="#f2f2f4" strokeWidth="4" />
          <path d="M24 25h11M24 38h36M28 44h6M37 44h15M42 51h8M24 70h10" stroke="#5f6672" strokeWidth="4" />
          <path d="M24 32h25M24 64h25M24 77h32" stroke="#c37f95" strokeWidth="4" />
          <path d="M37 25h7M52 51h11" stroke="#c37858" strokeWidth="4" />
          <path d="M61 38h5M46 57h6M37 70h5" stroke="#c295b9" strokeWidth="4" />
          <path d="M54 44h12" stroke="#a79d8c" strokeWidth="4" />
          <path d="M30 57h14" stroke="#b22b5e" strokeWidth="4" />
          <circle cx="81" cy="75" r="25" fill="#f0f0f0" stroke="#c9c9c9" />
          <text x="81" y="86" textAnchor="middle" fontSize="30" fontWeight="800" fill="#26292f">M</text>
        </DockItem>
        <DockItem name="Sublime Text" running>
          <defs><Grad id="su" from="#8d8d8d" to="#4a4a4a" /><Grad id="ss" from="#fbb85a" to="#f58000" /></defs>
          <path d="M17 18h78q3 0 4 4l6 70q0 4-4 4H12q-4 0-4-4l6-70q0-4 3-4Z" fill="#e9e9ec" />
          <path d="M13 76h86v8q0 4-4 4H17q-4 0-4-4Z" fill="#232323" />
          <path d="M22 12h68q4 0 4 4l5 57q0 4-4 4H17q-4 0-4-4l5-57q0-4 4-4Z" fill="url(#su)" />
          <text x="56" y="64" textAnchor="middle" fontSize="52" fontWeight="700" fill="url(#ss)">S</text>
        </DockItem>
        <DockItem name="iTerm">
          <rect x="12" y="17" width="88" height="78" rx="3" fill="#1a1a1a" stroke="#9a9c9e" strokeWidth="2" />
          <text x="18" y="48" fontSize="26" fontFamily="Liberation Mono, monospace" fontWeight="700" fill="#35e83b">$</text>
          <rect x="37" y="27" width="12" height="23" fill="#1fba24" />
        </DockItem>
        <DockItem name="Google Chrome" running>
          <circle cx="56" cy="56" r="48" fill="#f2be3c" />
          <path d="M14.400 32A48 48 0 0 1 97.600 34H56L37 67Z" fill="#cc3439" />
          <path d="M14.400 32A48 48 0 0 0 54 104L75 67 37 67Z" fill="#24a557" />
          <circle cx="56" cy="56" r="22" fill="#f3f3f3" />
          <circle cx="56" cy="56" r="18" fill="#447ce8" />
        </DockItem>
        <DockItem name="PyCharm" running>
          <path d="M12 23 49 7l18 15 10 60-36 23L6 85Z" fill="#2fdb87" />
          <path d="M79 7 58 27l24 10Z" fill="#a4f250" />
          <path d="m86 31 18 16-8 20-14-6Z" fill="#19bdd6" />
          <path d="m88 48 5-1 12 48-32 10-39-11 4-16Z" fill="#e9f934" />
          <rect x="27" y="27" width="59" height="58" fill="#111" />
          <text x="31" y="59" fontSize="35" fontWeight="700" fill="#fff">PC</text>
          <rect x="32" y="73" width="22" height="4" fill="#fff" />
        </DockItem>
        <DockItem name="Eclipse" running>
          <circle cx="50" cy="56" r="47" fill="#ee8f29" />
          <circle cx="58" cy="56" r="47" fill="#4a4668" />
          <circle cx="62" cy="56" r="45" fill="#291c4f" stroke="#0e0b22" />
          <path d="M35 69h54q-8 17-27 17T35 69Z" fill="#3b2a77" />
          <path d="M18 45.500h88M17 55.500h90M18 66.500h88" stroke="#f4f0fa" strokeWidth="5" />
        </DockItem>
        <DockItem name="HBuilder" running>
          <path d="M7 4h98L93 98l-37 10-38-10Z" fill="#22ab35" />
          <text x="56" y="79" textAnchor="middle" fontSize="68" fill="#fff">H</text>
        </DockItem>
        <span className="mt-2 mr-6 ml-[26px] h-25 w-[2px] bg-[#232a45]" />
        <DockItem name="Trash">
          <defs><Grad id="tr" from="#cfd0d2" to="#e3e3e3" /></defs>
          <ellipse cx="56" cy="20" rx="37" ry="9" fill="#8f949a" />
          <path d="m24 22 8-12 8 3 6-7 8 6 10-5 6 6 8-2 9 15Z" fill="#ececec" />
          <path d="m35 20 10-8 6 12ZM66 22l8-9 8 11Z" fill="#4f4543" />
          <path d="m46 18 10-3 2 8-10 2Z" fill="#3fae95" />
          <path d="m64 12 8 10-13 5Z" fill="#a85c4c" />
          <path d="M19 20q37 18 74 0l-7 72q-2 9-14 10H40q-11-1-13-10Z" fill="url(#tr)" />
          <path d="M19 20q37 18 74 0" fill="none" stroke="#f6f6f6" strokeWidth="1" />
          <path d="M26 84q30 14 60 0l-1 8q-2 9-13 10H40q-11-1-13-10Z" fill="#f2f2f2" opacity=".7" />
        </DockItem>
      </div>
    </footer>
  )
}

export default function App() {
  return (
    <div lang="zh-CN" className="flex h-screen flex-col overflow-hidden bg-[#02030f] font-[Inter,Noto_Sans_CJK_SC,sans-serif]">
      <MenuBar />
      <div className="mt-[2px] flex min-h-0 flex-1 flex-col overflow-hidden rounded-[10px]">
        <TitleBar />
        <div className="flex min-h-0 flex-1">
          <Sidebar />
          <NoteList />
          <Editor />
        </div>
      </div>
      <Dock />
    </div>
  )
}
